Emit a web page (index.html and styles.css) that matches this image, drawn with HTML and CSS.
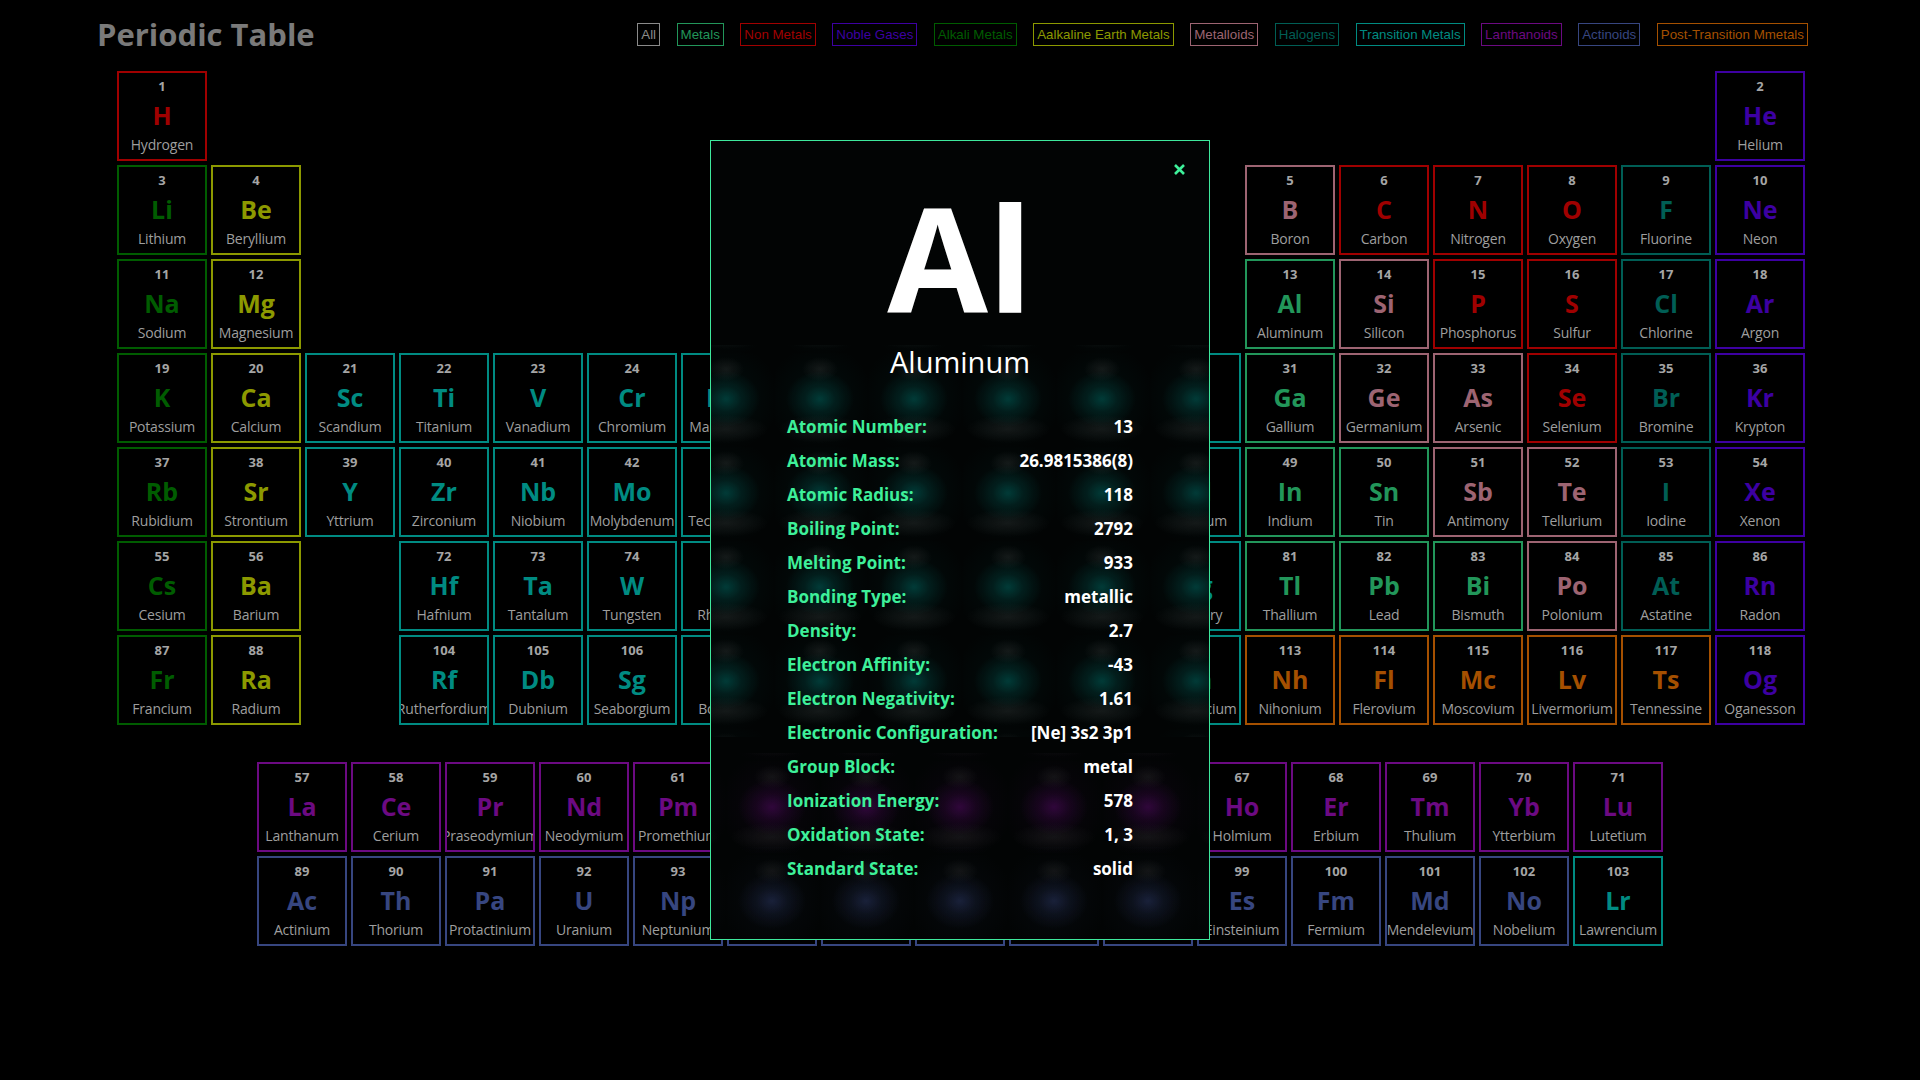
FILE: index.html
```html
<!DOCTYPE html>
<html lang="en">
<head>
<meta charset="utf-8">
<title>Periodic Table</title>
<link rel="stylesheet" href="styles.css">
</head>
<body>
<header class="header">
  <h1 class="title">Periodic Table</h1>
  <nav class="filters">
    <button class="filter all">All</button>
    <button class="filter mt">Metals</button>
    <button class="filter nm">Non Metals</button>
    <button class="filter ng">Noble Gases</button>
    <button class="filter ak">Alkali Metals</button>
    <button class="filter ae">Aalkaline Earth Metals</button>
    <button class="filter md">Metalloids</button>
    <button class="filter hl">Halogens</button>
    <button class="filter tm">Transition Metals</button>
    <button class="filter ln">Lanthanoids</button>
    <button class="filter ac">Actinoids</button>
    <button class="filter pt">Post-Transition Mmetals</button>
  </nav>
</header>

<main>
<section class="table">
  <div class="cell nm"><span class="num">1</span><span class="sym">H</span><span class="name">Hydrogen</span></div>
  <div class="cell ng c18"><span class="num">2</span><span class="sym">He</span><span class="name">Helium</span></div>

  <div class="cell ak"><span class="num">3</span><span class="sym">Li</span><span class="name">Lithium</span></div>
  <div class="cell ae"><span class="num">4</span><span class="sym">Be</span><span class="name">Beryllium</span></div>
  <div class="cell md c13"><span class="num">5</span><span class="sym">B</span><span class="name">Boron</span></div>
  <div class="cell nm"><span class="num">6</span><span class="sym">C</span><span class="name">Carbon</span></div>
  <div class="cell nm"><span class="num">7</span><span class="sym">N</span><span class="name">Nitrogen</span></div>
  <div class="cell nm"><span class="num">8</span><span class="sym">O</span><span class="name">Oxygen</span></div>
  <div class="cell hl"><span class="num">9</span><span class="sym">F</span><span class="name">Fluorine</span></div>
  <div class="cell ng"><span class="num">10</span><span class="sym">Ne</span><span class="name">Neon</span></div>

  <div class="cell ak"><span class="num">11</span><span class="sym">Na</span><span class="name">Sodium</span></div>
  <div class="cell ae"><span class="num">12</span><span class="sym">Mg</span><span class="name">Magnesium</span></div>
  <div class="cell mt c13"><span class="num">13</span><span class="sym">Al</span><span class="name">Aluminum</span></div>
  <div class="cell md"><span class="num">14</span><span class="sym">Si</span><span class="name">Silicon</span></div>
  <div class="cell nm"><span class="num">15</span><span class="sym">P</span><span class="name">Phosphorus</span></div>
  <div class="cell nm"><span class="num">16</span><span class="sym">S</span><span class="name">Sulfur</span></div>
  <div class="cell hl"><span class="num">17</span><span class="sym">Cl</span><span class="name">Chlorine</span></div>
  <div class="cell ng"><span class="num">18</span><span class="sym">Ar</span><span class="name">Argon</span></div>

  <div class="cell ak"><span class="num">19</span><span class="sym">K</span><span class="name">Potassium</span></div>
  <div class="cell ae"><span class="num">20</span><span class="sym">Ca</span><span class="name">Calcium</span></div>
  <div class="cell tm"><span class="num">21</span><span class="sym">Sc</span><span class="name">Scandium</span></div>
  <div class="cell tm"><span class="num">22</span><span class="sym">Ti</span><span class="name">Titanium</span></div>
  <div class="cell tm"><span class="num">23</span><span class="sym">V</span><span class="name">Vanadium</span></div>
  <div class="cell tm"><span class="num">24</span><span class="sym">Cr</span><span class="name">Chromium</span></div>
  <div class="cell tm"><span class="num">25</span><span class="sym">Mn</span><span class="name">Manganese</span></div>
  <div class="cell tm"><span class="num">26</span><span class="sym">Fe</span><span class="name">Iron</span></div>
  <div class="cell tm"><span class="num">27</span><span class="sym">Co</span><span class="name">Cobalt</span></div>
  <div class="cell tm"><span class="num">28</span><span class="sym">Ni</span><span class="name">Nickel</span></div>
  <div class="cell tm"><span class="num">29</span><span class="sym">Cu</span><span class="name">Copper</span></div>
  <div class="cell tm"><span class="num">30</span><span class="sym">Zn</span><span class="name">Zinc</span></div>
  <div class="cell mt"><span class="num">31</span><span class="sym">Ga</span><span class="name">Gallium</span></div>
  <div class="cell md"><span class="num">32</span><span class="sym">Ge</span><span class="name">Germanium</span></div>
  <div class="cell md"><span class="num">33</span><span class="sym">As</span><span class="name">Arsenic</span></div>
  <div class="cell nm"><span class="num">34</span><span class="sym">Se</span><span class="name">Selenium</span></div>
  <div class="cell hl"><span class="num">35</span><span class="sym">Br</span><span class="name">Bromine</span></div>
  <div class="cell ng"><span class="num">36</span><span class="sym">Kr</span><span class="name">Krypton</span></div>

  <div class="cell ak"><span class="num">37</span><span class="sym">Rb</span><span class="name">Rubidium</span></div>
  <div class="cell ae"><span class="num">38</span><span class="sym">Sr</span><span class="name">Strontium</span></div>
  <div class="cell tm"><span class="num">39</span><span class="sym">Y</span><span class="name">Yttrium</span></div>
  <div class="cell tm"><span class="num">40</span><span class="sym">Zr</span><span class="name">Zirconium</span></div>
  <div class="cell tm"><span class="num">41</span><span class="sym">Nb</span><span class="name">Niobium</span></div>
  <div class="cell tm"><span class="num">42</span><span class="sym">Mo</span><span class="name">Molybdenum</span></div>
  <div class="cell tm"><span class="num">43</span><span class="sym">Tc</span><span class="name">Technetium</span></div>
  <div class="cell tm"><span class="num">44</span><span class="sym">Ru</span><span class="name">Ruthenium</span></div>
  <div class="cell tm"><span class="num">45</span><span class="sym">Rh</span><span class="name">Rhodium</span></div>
  <div class="cell tm"><span class="num">46</span><span class="sym">Pd</span><span class="name">Palladium</span></div>
  <div class="cell tm"><span class="num">47</span><span class="sym">Ag</span><span class="name">Silver</span></div>
  <div class="cell tm"><span class="num">48</span><span class="sym">Cd</span><span class="name">Cadmium</span></div>
  <div class="cell mt"><span class="num">49</span><span class="sym">In</span><span class="name">Indium</span></div>
  <div class="cell mt"><span class="num">50</span><span class="sym">Sn</span><span class="name">Tin</span></div>
  <div class="cell md"><span class="num">51</span><span class="sym">Sb</span><span class="name">Antimony</span></div>
  <div class="cell md"><span class="num">52</span><span class="sym">Te</span><span class="name">Tellurium</span></div>
  <div class="cell hl"><span class="num">53</span><span class="sym">I</span><span class="name">Iodine</span></div>
  <div class="cell ng"><span class="num">54</span><span class="sym">Xe</span><span class="name">Xenon</span></div>

  <div class="cell ak"><span class="num">55</span><span class="sym">Cs</span><span class="name">Cesium</span></div>
  <div class="cell ae"><span class="num">56</span><span class="sym">Ba</span><span class="name">Barium</span></div>
  <div class="cell tm c4"><span class="num">72</span><span class="sym">Hf</span><span class="name">Hafnium</span></div>
  <div class="cell tm"><span class="num">73</span><span class="sym">Ta</span><span class="name">Tantalum</span></div>
  <div class="cell tm"><span class="num">74</span><span class="sym">W</span><span class="name">Tungsten</span></div>
  <div class="cell tm"><span class="num">75</span><span class="sym">Re</span><span class="name">Rhenium</span></div>
  <div class="cell tm"><span class="num">76</span><span class="sym">Os</span><span class="name">Osmium</span></div>
  <div class="cell tm"><span class="num">77</span><span class="sym">Ir</span><span class="name">Iridium</span></div>
  <div class="cell tm"><span class="num">78</span><span class="sym">Pt</span><span class="name">Platinum</span></div>
  <div class="cell tm"><span class="num">79</span><span class="sym">Au</span><span class="name">Gold</span></div>
  <div class="cell tm"><span class="num">80</span><span class="sym">Hg</span><span class="name">Mercury</span></div>
  <div class="cell mt"><span class="num">81</span><span class="sym">Tl</span><span class="name">Thallium</span></div>
  <div class="cell mt"><span class="num">82</span><span class="sym">Pb</span><span class="name">Lead</span></div>
  <div class="cell mt"><span class="num">83</span><span class="sym">Bi</span><span class="name">Bismuth</span></div>
  <div class="cell md"><span class="num">84</span><span class="sym">Po</span><span class="name">Polonium</span></div>
  <div class="cell hl"><span class="num">85</span><span class="sym">At</span><span class="name">Astatine</span></div>
  <div class="cell ng"><span class="num">86</span><span class="sym">Rn</span><span class="name">Radon</span></div>

  <div class="cell ak"><span class="num">87</span><span class="sym">Fr</span><span class="name">Francium</span></div>
  <div class="cell ae"><span class="num">88</span><span class="sym">Ra</span><span class="name">Radium</span></div>
  <div class="cell tm c4"><span class="num">104</span><span class="sym">Rf</span><span class="name">Rutherfordium</span></div>
  <div class="cell tm"><span class="num">105</span><span class="sym">Db</span><span class="name">Dubnium</span></div>
  <div class="cell tm"><span class="num">106</span><span class="sym">Sg</span><span class="name">Seaborgium</span></div>
  <div class="cell tm"><span class="num">107</span><span class="sym">Bh</span><span class="name">Bohrium</span></div>
  <div class="cell tm"><span class="num">108</span><span class="sym">Hs</span><span class="name">Hassium</span></div>
  <div class="cell tm"><span class="num">109</span><span class="sym">Mt</span><span class="name">Meitnerium</span></div>
  <div class="cell tm"><span class="num">110</span><span class="sym">Ds</span><span class="name">Darmstadtium</span></div>
  <div class="cell tm"><span class="num">111</span><span class="sym">Rg</span><span class="name">Roentgenium</span></div>
  <div class="cell tm"><span class="num">112</span><span class="sym">Cn</span><span class="name">Copernicium</span></div>
  <div class="cell pt"><span class="num">113</span><span class="sym">Nh</span><span class="name">Nihonium</span></div>
  <div class="cell pt"><span class="num">114</span><span class="sym">Fl</span><span class="name">Flerovium</span></div>
  <div class="cell pt"><span class="num">115</span><span class="sym">Mc</span><span class="name">Moscovium</span></div>
  <div class="cell pt"><span class="num">116</span><span class="sym">Lv</span><span class="name">Livermorium</span></div>
  <div class="cell pt"><span class="num">117</span><span class="sym">Ts</span><span class="name">Tennessine</span></div>
  <div class="cell ng"><span class="num">118</span><span class="sym">Og</span><span class="name">Oganesson</span></div>
</section>

<section class="fblock">
  <div class="cell ln"><span class="num">57</span><span class="sym">La</span><span class="name">Lanthanum</span></div>
  <div class="cell ln"><span class="num">58</span><span class="sym">Ce</span><span class="name">Cerium</span></div>
  <div class="cell ln"><span class="num">59</span><span class="sym">Pr</span><span class="name">Praseodymium</span></div>
  <div class="cell ln"><span class="num">60</span><span class="sym">Nd</span><span class="name">Neodymium</span></div>
  <div class="cell ln"><span class="num">61</span><span class="sym">Pm</span><span class="name">Promethium</span></div>
  <div class="cell ln"><span class="num">62</span><span class="sym">Sm</span><span class="name">Samarium</span></div>
  <div class="cell ln"><span class="num">63</span><span class="sym">Eu</span><span class="name">Europium</span></div>
  <div class="cell ln"><span class="num">64</span><span class="sym">Gd</span><span class="name">Gadolinium</span></div>
  <div class="cell ln"><span class="num">65</span><span class="sym">Tb</span><span class="name">Terbium</span></div>
  <div class="cell ln"><span class="num">66</span><span class="sym">Dy</span><span class="name">Dysprosium</span></div>
  <div class="cell ln"><span class="num">67</span><span class="sym">Ho</span><span class="name">Holmium</span></div>
  <div class="cell ln"><span class="num">68</span><span class="sym">Er</span><span class="name">Erbium</span></div>
  <div class="cell ln"><span class="num">69</span><span class="sym">Tm</span><span class="name">Thulium</span></div>
  <div class="cell ln"><span class="num">70</span><span class="sym">Yb</span><span class="name">Ytterbium</span></div>
  <div class="cell ln"><span class="num">71</span><span class="sym">Lu</span><span class="name">Lutetium</span></div>

  <div class="cell ac"><span class="num">89</span><span class="sym">Ac</span><span class="name">Actinium</span></div>
  <div class="cell ac"><span class="num">90</span><span class="sym">Th</span><span class="name">Thorium</span></div>
  <div class="cell ac"><span class="num">91</span><span class="sym">Pa</span><span class="name">Protactinium</span></div>
  <div class="cell ac"><span class="num">92</span><span class="sym">U</span><span class="name">Uranium</span></div>
  <div class="cell ac"><span class="num">93</span><span class="sym">Np</span><span class="name">Neptunium</span></div>
  <div class="cell ac"><span class="num">94</span><span class="sym">Pu</span><span class="name">Plutonium</span></div>
  <div class="cell ac"><span class="num">95</span><span class="sym">Am</span><span class="name">Americium</span></div>
  <div class="cell ac"><span class="num">96</span><span class="sym">Cm</span><span class="name">Curium</span></div>
  <div class="cell ac"><span class="num">97</span><span class="sym">Bk</span><span class="name">Berkelium</span></div>
  <div class="cell ac"><span class="num">98</span><span class="sym">Cf</span><span class="name">Californium</span></div>
  <div class="cell ac"><span class="num">99</span><span class="sym">Es</span><span class="name">Einsteinium</span></div>
  <div class="cell ac"><span class="num">100</span><span class="sym">Fm</span><span class="name">Fermium</span></div>
  <div class="cell ac"><span class="num">101</span><span class="sym">Md</span><span class="name">Mendelevium</span></div>
  <div class="cell ac"><span class="num">102</span><span class="sym">No</span><span class="name">Nobelium</span></div>
  <div class="cell tm"><span class="num">103</span><span class="sym">Lr</span><span class="name">Lawrencium</span></div>
</section>
</main>

<div class="modal">
  <div class="haze haze-main" aria-hidden="true"></div>
  <div class="haze haze-ln" aria-hidden="true"></div>
  <div class="haze haze-ac" aria-hidden="true"></div>
  <button class="close" aria-label="Close">
    <svg width="11" height="11" viewBox="0 0 11 11"><path d="M1 1L10 10M10 1L1 10" stroke="currentColor" stroke-width="2.6" stroke-linecap="butt"/></svg>
  </button>
  <div class="big">Al</div>
  <div class="elname">Aluminum</div>
  <div class="props">
    <div class="prop"><span class="k">Atomic Number:</span><span class="v">13</span></div>
    <div class="prop"><span class="k">Atomic Mass:</span><span class="v">26.9815386(8)</span></div>
    <div class="prop"><span class="k">Atomic Radius:</span><span class="v">118</span></div>
    <div class="prop"><span class="k">Boiling Point:</span><span class="v">2792</span></div>
    <div class="prop"><span class="k">Melting Point:</span><span class="v">933</span></div>
    <div class="prop"><span class="k">Bonding Type:</span><span class="v">metallic</span></div>
    <div class="prop"><span class="k">Density:</span><span class="v">2.7</span></div>
    <div class="prop"><span class="k">Electron Affinity:</span><span class="v">-43</span></div>
    <div class="prop"><span class="k">Electron Negativity:</span><span class="v">1.61</span></div>
    <div class="prop"><span class="k">Electronic Configuration:</span><span class="v">[Ne] 3s2 3p1</span></div>
    <div class="prop"><span class="k">Group Block:</span><span class="v">metal</span></div>
    <div class="prop"><span class="k">Ionization Energy:</span><span class="v">578</span></div>
    <div class="prop"><span class="k">Oxidation State:</span><span class="v">1, 3</span></div>
    <div class="prop"><span class="k">Standard State:</span><span class="v">solid</span></div>
  </div>
</div>
</body>
</html>
```

FILE: styles.css
```css
html, body {
  margin: 0;
  background: #000;
}
body {
  font-family: "Open Sans", "Noto Sans", sans-serif;
  min-height: 1080px;
}

/* header */
.header {
  display: flex;
  justify-content: space-between;
  align-items: center;
  height: 40px;
  padding: 14px 112px 0 97px;
}
.title {
  margin: 0;
  font-size: 31px;
  line-height: 40px;
  font-weight: 700;
  color: #7a7a7a;
}
.filters {
  display: flex;
  gap: 16.5px;
}
.filter {
  font-family: "Liberation Sans", Arial, sans-serif;
  font-size: 13.333px;
  line-height: 15px;
  padding: 3px 3px;
  margin: 0;
  border: 1px solid currentColor;
  background: transparent;
  cursor: pointer;
}

/* category colours */
.all { color: #8a8a8a; }
.mt  { color: #22965a; }
.nm  { color: #a00000; }
.ng  { color: #3d00a2; }
.ak  { color: #005c00; }
.ae  { color: #8c9900; }
.md  { color: #9d6472; }
.hl  { color: #005e55; }
.tm  { color: #008b82; }
.ln  { color: #6c0a82; }
.ac  { color: #374680; }
.pt  { color: #a55000; }

/* table */
.table {
  display: grid;
  grid-template-columns: repeat(18, 90px);
  grid-auto-rows: 90px;
  gap: 4px;
  justify-content: center;
  padding-left: 2px;
  margin-top: 17px;
}
.c4 { grid-column: 4; }
.c13 { grid-column: 13; }
.c18 { grid-column: 18; }

.fblock {
  display: grid;
  grid-template-columns: repeat(15, 90px);
  grid-auto-rows: 90px;
  gap: 4px;
  justify-content: center;
  margin-top: 37px;
}

.cell {
  box-sizing: border-box;
  border: 2px solid currentColor;
  display: flex;
  flex-direction: column;
  align-items: center;
  overflow: hidden;
  padding-top: 4px;
  background: #000;
}
.num {
  font-size: 13px;
  font-weight: 700;
  line-height: 18px;
  color: #a5a5a5;
}
.sym {
  font-size: 25px;
  font-weight: 700;
  line-height: 41px;
}
.name {
  font-size: 14px;
  line-height: 18px;
  color: #9e9e9e;
  white-space: nowrap;
  letter-spacing: -0.2px;
}

/* modal */
.modal {
  position: fixed;
  inset: 0;
  margin: auto;
  width: 500px;
  height: 800px;
  box-sizing: border-box;
  border: 1px solid #3ee89c;
  background: #020404;
  overflow: hidden;
  display: flex;
  flex-direction: column;
  align-items: center;
  padding-top: 43px;
}

/* blurred glimpse of the table behind the modal */
.haze {
  position: absolute;
  left: 0;
  right: 0;
  z-index: -1;
  background-size: 94px 94px;
}
.haze-main {
  top: 204px;
  height: 392px;
  background-position: -30px 8px;
  background-image:
    radial-gradient(34px 28px at 45px 46px, rgba(0,139,130,.36), rgba(0,139,130,.15) 45%, rgba(0,139,130,0) 100%),
    radial-gradient(42px 14px at 45px 76px, rgba(150,150,150,.12), rgba(150,150,150,0)),
    radial-gradient(18px 12px at 45px 16px, rgba(150,150,150,.12), rgba(150,150,150,0)),
    radial-gradient(54px 54px at 45px 45px, rgba(0,139,130,.07), rgba(0,139,130,0));
}
.haze-ln {
  top: 612px;
  height: 100px;
  background-position: 16px 8px;
  background-image:
    radial-gradient(34px 28px at 45px 46px, rgba(108,10,130,.38), rgba(108,10,130,.16) 45%, rgba(108,10,130,0) 100%),
    radial-gradient(42px 14px at 45px 76px, rgba(150,150,150,.1), rgba(150,150,150,0)),
    radial-gradient(18px 12px at 45px 16px, rgba(150,150,150,.1), rgba(150,150,150,0)),
    radial-gradient(54px 54px at 45px 45px, rgba(108,10,130,.08), rgba(108,10,130,0));
}
.haze-ac {
  top: 706px;
  height: 100px;
  background-position: 16px 8px;
  background-image:
    radial-gradient(34px 28px at 45px 46px, rgba(55,70,128,.38), rgba(55,70,128,.16) 45%, rgba(55,70,128,0) 100%),
    radial-gradient(18px 12px at 45px 16px, rgba(150,150,150,.1), rgba(150,150,150,0)),
    radial-gradient(54px 54px at 45px 45px, rgba(55,70,128,.08), rgba(55,70,128,0));
}

.close {
  position: absolute;
  top: 23px;
  right: 24px;
  width: 11px;
  height: 11px;
  padding: 0;
  border: 0;
  background: none;
  color: #3ef09a;
  display: flex;
}
.big {
  font-size: 146px;
  line-height: 146px;
  font-weight: 700;
  color: #fff;
}
.elname {
  font-size: 29px;
  line-height: 36px;
  color: #fff;
  margin-top: 14px;
}
.props {
  width: 346px;
  margin-top: 30px;
}
.prop {
  display: flex;
  justify-content: space-between;
  height: 34px;
  line-height: 34px;
  font-size: 17px;
  font-weight: 700;
}
.prop .k { color: #3ef09a; }
.prop .v { color: #fff; }
```
